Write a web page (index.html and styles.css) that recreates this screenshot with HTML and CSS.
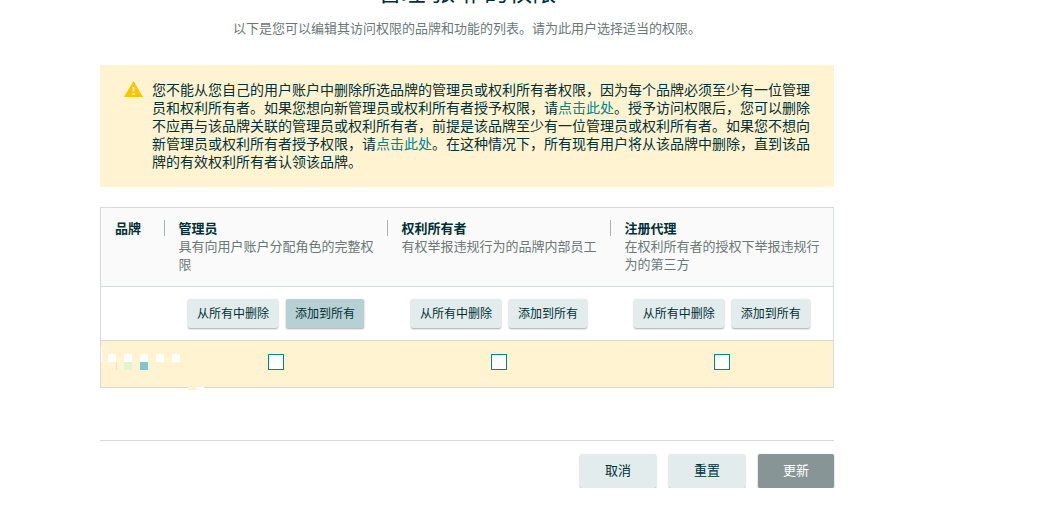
FILE: index.html
```html
<!DOCTYPE html>
<html lang="zh-CN">
<head>
<meta charset="utf-8">
<title>管理权限</title>
<link rel="stylesheet" href="styles.css">
</head>
<body>
<main class="page">
  <header class="intro">
    <h1 class="title">管理 张琳 的权限</h1>
    <p class="subtitle">以下是您可以编辑其访问权限的品牌和功能的列表。请为此用户选择适当的权限。</p>
  </header>

  <section class="alert">
    <svg class="alert-icon" viewBox="0 0 19 16" aria-hidden="true">
      <path d="M9.5 0 L19 16 H0 Z" fill="#ffc400"/>
      <path d="M8.5 6h2v4.5h-2zM8.5 12h2v2h-2z" fill="#fff3d1"/>
    </svg>
    <p class="alert-text">您不能从您自己的用户账户中删除所选品牌的管理员或权利所有者权限，因为每个品牌必须至少有一位管理员和权利所有者。如果您想向新管理员或权利所有者授予权限，请<a href="#grant">点击此处</a>。授予访问权限后，您可以删除不应再与该品牌关联的管理员或权利所有者，前提是该品牌至少有一位管理员或权利所有者。如果您不想向新管理员或权利所有者授予权限，请<a href="#remove">点击此处</a>。在这种情况下，所有现有用户将从该品牌中删除，直到该品牌的有效权利所有者认领该品牌。</p>
  </section>

  <table class="roles">
    <colgroup>
      <col class="col-brand"><col><col><col>
    </colgroup>
    <thead>
      <tr>
        <th scope="col"><div class="head">品牌</div></th>
        <th scope="col"><div class="head">管理员</div><p class="desc">具有向用户账户分配角色的完整权限</p></th>
        <th scope="col"><div class="head">权利所有者</div><p class="desc">有权举报违规行为的品牌内部员工</p></th>
        <th scope="col"><div class="head">注册代理</div><p class="desc">在权利所有者的授权下举报违规行为的第三方</p></th>
      </tr>
    </thead>
    <tbody>
      <tr class="bulk">
        <td></td>
        <td><div class="pair"><button type="button" class="btn small">从所有中删除</button><button type="button" class="btn small active">添加到所有</button></div></td>
        <td><div class="pair"><button type="button" class="btn small">从所有中删除</button><button type="button" class="btn small">添加到所有</button></div></td>
        <td><div class="pair"><button type="button" class="btn small">从所有中删除</button><button type="button" class="btn small">添加到所有</button></div></td>
      </tr>
      <tr class="brand">
        <td class="brand-name">
          <svg class="mosaic" viewBox="0 0 108 49" aria-hidden="true">
            <path d="M0 5h1v16H0zM7 13h8v8H7zM23 13h8v8h-8zM39 13h8v8h-8zM55 13h8v8h-8zM71 13h8v8h-8zM95 46h8v3h-8z" fill="#fff"/>
            <path d="M23 21h8v8h-8z" fill="#e5f3cf"/>
            <path d="M39 21h8v8h-8z" fill="#83c3cf"/>
            <path d="M15 21h1v8h-1z" fill="#e3e2ca"/>
            <path d="M87 46h8v3h-8z" fill="#fff3d1"/>
          </svg>
        </td>
        <td><input type="checkbox" class="check" aria-label="管理员"></td>
        <td><input type="checkbox" class="check" aria-label="权利所有者"></td>
        <td><input type="checkbox" class="check" aria-label="注册代理"></td>
      </tr>
    </tbody>
  </table>

  <footer class="actions">
    <button type="button" class="btn">取消</button>
    <button type="button" class="btn">重置</button>
    <button type="button" class="btn primary">更新</button>
  </footer>
</main>
</body>
</html>
```
FILE: styles.css
```css
* { box-sizing: border-box; }

body {
  margin: 0;
  background: #fff;
  color: #002f36;
  font: 13px/18px "Noto Sans CJK SC", sans-serif;
  overflow-x: hidden;
}

.page {
  margin: -25px 211px 0 100px;
}

.intro { text-align: center; }

.title {
  margin: 0;
  font-size: 24px;
  line-height: 32px;
  font-weight: 400;
}

.subtitle {
  margin: 12px 0 0;
  color: #6c7778;
}

.alert {
  display: flex;
  gap: 9px;
  margin-top: 28px;
  padding: 15px 22px 17px 24px;
  background: #fff3d1;
}

.alert-icon {
  flex: none;
  width: 19px;
  height: 16px;
  margin-top: 1px;
}

.alert-text {
  margin: 0;
  font-size: 14px;
}

.alert-text a {
  color: #008296;
  text-decoration: none;
}

.roles {
  width: 100%;
  margin-top: 20px;
  table-layout: fixed;
  border-collapse: collapse;
  border: 1px solid #d5dbdb;
}

.col-brand { width: 64px; }

.roles thead { background: #fafafa; }

.roles tr { border-bottom: 1px solid #d5dbdb; }

.roles th {
  height: 79px;
  padding: 11px 0 12px 14px;
  text-align: left;
  vertical-align: top;
  font-weight: 400;
}

.head {
  font-weight: 700;
}

th + th .head {
  position: relative;
}

.roles th + th {
  padding-right: 10px;
}

th + th .head::before {
  content: "";
  position: absolute;
  left: -15px;
  top: 1px;
  width: 1px;
  height: 16px;
  background: #a2b4b3;
}

.desc {
  margin: 0;
  color: #6c7778;
}

.roles td { padding: 0; }

.bulk td { height: 54px; }

.pair {
  display: flex;
  justify-content: center;
  gap: 8px;
}

.btn {
  width: 76px;
  height: 34px;
  padding: 0 0 2px;
  border: 0;
  border-radius: 2px;
  background: #e2ecec;
  box-shadow: 0 1px 2px rgba(0, 0, 0, 0.35);
  color: #002f36;
  font: inherit;
}

.small {
  width: auto;
  height: 29px;
  padding: 0 9px 2px;
  font-size: 12px;
}

.active { background: #b7d0d3; }

.primary {
  background: #879596;
  color: #fff;
}

.brand {
  background: #fff3d1;
  text-align: center;
}

.brand td {
  height: 47px;
  vertical-align: top;
}

.brand-name { position: relative; }

.mosaic {
  position: absolute;
  left: 0;
  top: 0;
  width: 108px;
  height: 49px;
}

.check {
  appearance: none;
  width: 16px;
  height: 16px;
  margin: 13px 0 0;
  border: 1px solid #008296;
  background: #fff;
}

.actions {
  display: flex;
  justify-content: flex-end;
  gap: 13px;
  margin-top: 52px;
  padding-top: 13px;
  border-top: 1px solid #d9d9d9;
}
```
